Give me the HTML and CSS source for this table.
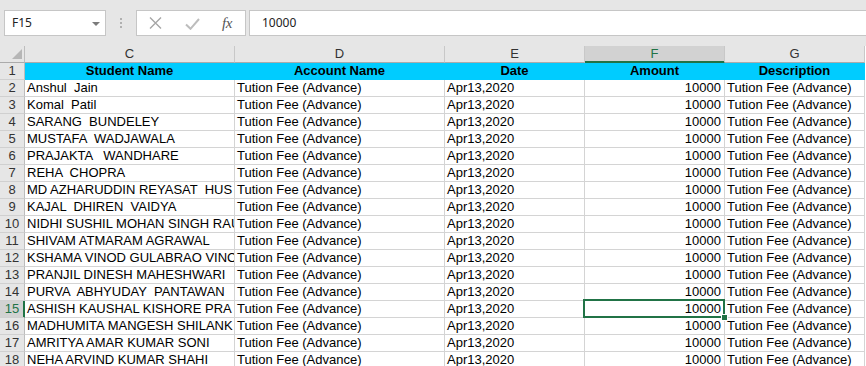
FILE: index.html
```html
<!DOCTYPE html>
<html lang="en">
<head>
<meta charset="utf-8">
<title>Fees sheet</title>
<link rel="stylesheet" href="styles.css">
</head>
<body>
<div class="app">
  <div class="toolbar">
    <div class="namebox">
      <span class="cellref">F15</span>
      <svg class="caret" width="8" height="4" viewBox="0 0 8 4"><path d="M0 0H8L4 4Z" fill="#7b7b7b"/></svg>
    </div>
    <div class="grip"><i></i><i></i><i></i></div>
    <div class="fxbox">
      <svg class="ico-x" width="13" height="12" viewBox="0 0 13 12"><path d="M1 0.5L12 11.5M12 0.5L1 11.5" stroke="#a6a6a6" stroke-width="1.4" fill="none"/></svg>
      <svg class="ico-ok" width="15" height="12" viewBox="0 0 15 12"><path d="M1 6.5L5.5 10.8L14 1" stroke="#bdbdbd" stroke-width="2" fill="none"/></svg>
      <span class="fx">fx</span>
    </div>
    <div class="formula">10000</div>
  </div>

  <div class="sheet">
    <div class="row">
      <div class="hd corner"><svg width="11" height="11" viewBox="0 0 11 11"><path d="M10 0V10H0Z" fill="#b6b6b6"/></svg></div>
      <div class="hd col">C</div>
      <div class="hd col">D</div>
      <div class="hd col">E</div>
      <div class="hd col sel">F</div>
      <div class="hd col">G</div>
    </div>
    <div class="row title">
      <div class="hd rn">1</div>
      <div class="c t">Student Name</div>
      <div class="c t">Account Name</div>
      <div class="c t">Date</div>
      <div class="c t">Amount</div>
      <div class="c t">Description</div>
    </div>
    <div class="row"><div class="hd rn">2</div><div class="c">Anshul  Jain</div><div class="c">Tution Fee (Advance)</div><div class="c">Apr13,2020</div><div class="c num">10000</div><div class="c">Tution Fee (Advance)</div></div>
    <div class="row"><div class="hd rn">3</div><div class="c">Komal  Patil</div><div class="c">Tution Fee (Advance)</div><div class="c">Apr13,2020</div><div class="c num">10000</div><div class="c">Tution Fee (Advance)</div></div>
    <div class="row"><div class="hd rn">4</div><div class="c">SARANG  BUNDELEY</div><div class="c">Tution Fee (Advance)</div><div class="c">Apr13,2020</div><div class="c num">10000</div><div class="c">Tution Fee (Advance)</div></div>
    <div class="row"><div class="hd rn">5</div><div class="c">MUSTAFA  WADJAWALA</div><div class="c">Tution Fee (Advance)</div><div class="c">Apr13,2020</div><div class="c num">10000</div><div class="c">Tution Fee (Advance)</div></div>
    <div class="row"><div class="hd rn">6</div><div class="c">PRAJAKTA   WANDHARE</div><div class="c">Tution Fee (Advance)</div><div class="c">Apr13,2020</div><div class="c num">10000</div><div class="c">Tution Fee (Advance)</div></div>
    <div class="row"><div class="hd rn">7</div><div class="c">REHA  CHOPRA</div><div class="c">Tution Fee (Advance)</div><div class="c">Apr13,2020</div><div class="c num">10000</div><div class="c">Tution Fee (Advance)</div></div>
    <div class="row"><div class="hd rn">8</div><div class="c">MD AZHARUDDIN REYASAT  HUS</div><div class="c">Tution Fee (Advance)</div><div class="c">Apr13,2020</div><div class="c num">10000</div><div class="c">Tution Fee (Advance)</div></div>
    <div class="row"><div class="hd rn">9</div><div class="c">KAJAL  DHIREN  VAIDYA</div><div class="c">Tution Fee (Advance)</div><div class="c">Apr13,2020</div><div class="c num">10000</div><div class="c">Tution Fee (Advance)</div></div>
    <div class="row"><div class="hd rn">10</div><div class="c">NIDHI SUSHIL MOHAN SINGH RAU</div><div class="c">Tution Fee (Advance)</div><div class="c">Apr13,2020</div><div class="c num">10000</div><div class="c">Tution Fee (Advance)</div></div>
    <div class="row"><div class="hd rn">11</div><div class="c">SHIVAM ATMARAM AGRAWAL</div><div class="c">Tution Fee (Advance)</div><div class="c">Apr13,2020</div><div class="c num">10000</div><div class="c">Tution Fee (Advance)</div></div>
    <div class="row"><div class="hd rn">12</div><div class="c">KSHAMA VINOD GULABRAO VINC</div><div class="c">Tution Fee (Advance)</div><div class="c">Apr13,2020</div><div class="c num">10000</div><div class="c">Tution Fee (Advance)</div></div>
    <div class="row"><div class="hd rn">13</div><div class="c">PRANJIL DINESH MAHESHWARI</div><div class="c">Tution Fee (Advance)</div><div class="c">Apr13,2020</div><div class="c num">10000</div><div class="c">Tution Fee (Advance)</div></div>
    <div class="row"><div class="hd rn">14</div><div class="c">PURVA  ABHYUDAY  PANTAWAN</div><div class="c">Tution Fee (Advance)</div><div class="c">Apr13,2020</div><div class="c num">10000</div><div class="c">Tution Fee (Advance)</div></div>
    <div class="row"><div class="hd rn sel">15</div><div class="c">ASHISH KAUSHAL KISHORE PRA</div><div class="c">Tution Fee (Advance)</div><div class="c">Apr13,2020</div><div class="c num active">10000</div><div class="c">Tution Fee (Advance)</div></div>
    <div class="row"><div class="hd rn">16</div><div class="c">MADHUMITA MANGESH SHILANK</div><div class="c">Tution Fee (Advance)</div><div class="c">Apr13,2020</div><div class="c num">10000</div><div class="c">Tution Fee (Advance)</div></div>
    <div class="row"><div class="hd rn">17</div><div class="c">AMRITYA AMAR KUMAR SONI</div><div class="c">Tution Fee (Advance)</div><div class="c">Apr13,2020</div><div class="c num">10000</div><div class="c">Tution Fee (Advance)</div></div>
    <div class="row"><div class="hd rn">18</div><div class="c">NEHA ARVIND KUMAR SHAHI</div><div class="c">Tution Fee (Advance)</div><div class="c">Apr13,2020</div><div class="c num">10000</div><div class="c">Tution Fee (Advance)</div></div>
  </div>
</div>
</body>
</html>
```

FILE: styles.css
```css
html, body {
  margin: 0;
  padding: 0;
  overflow: hidden;
  background: #ffffff;
}

.app {
  width: 866px;
  height: 366px;
  overflow: hidden;
}

/* ---------- formula bar ---------- */
.toolbar {
  height: 46px;
  box-sizing: border-box;
  padding-top: 10px;
  background: #e6e6e6;
  display: flex;
  align-items: flex-start;
  font-family: "Noto Sans", "Liberation Sans", sans-serif;
  font-size: 12px;
  color: #222;
}

.namebox {
  margin-left: 4px;
  width: 102px;
  height: 26px;
  box-sizing: border-box;
  border: 1px solid #c6c6c6;
  background: #fff;
  display: flex;
  align-items: center;
  justify-content: space-between;
  padding: 0 5px 0 7px;
}

.cellref {
  line-height: 16px;
}

.caret {
  display: block;
  margin-top: 1px;
}

.grip {
  width: 30px;
  height: 26px;
  display: flex;
  flex-direction: column;
  align-items: center;
  justify-content: center;
  gap: 2px;
}

.grip i {
  display: block;
  width: 2px;
  height: 2px;
  background: #b0b0b0;
}

.fxbox {
  width: 110px;
  height: 26px;
  box-sizing: border-box;
  border: 1px solid #c6c6c6;
  background: #fff;
  display: flex;
  align-items: center;
  padding-left: 12px;
}

.ico-x {
  display: block;
}

.ico-ok {
  display: block;
  margin-left: 23px;
  margin-top: 1px;
}

.fx {
  margin-left: 22px;
  font-family: "Liberation Serif", serif;
  font-style: italic;
  font-size: 15px;
  line-height: 16px;
  color: #555;
  letter-spacing: -0.5px;
}

.formula {
  flex: 1;
  margin-left: 3px;
  height: 26px;
  box-sizing: border-box;
  border: 1px solid #c6c6c6;
  border-right: none;
  background: #fff;
  padding-left: 12px;
  line-height: 24px;
}

/* ---------- sheet grid ---------- */
.sheet {
  display: grid;
  grid-template-columns: 25px 210px 210px 140px 140px 140px;
  grid-auto-rows: 17px;
  font-family: "Liberation Sans", Arial, sans-serif;
  font-size: 13px;
  color: #000;
}

.row {
  display: contents;
}

.hd {
  box-sizing: border-box;
  background: #e6e6e6;
  color: #333;
  border-right: 1px solid #c8c8c8;
  border-bottom: 1px solid #c8c8c8;
  text-align: center;
  line-height: 16px;
  overflow: hidden;
}

.corner {
  position: relative;
  border-bottom-color: #ababab;
  border-right-color: #bdbdbd;
}

.corner svg {
  position: absolute;
  left: 12px;
  top: 3px;
}

.col {
  border-bottom-color: #ababab;
}

.col.sel {
  background: #d2d2d2;
  color: #217346;
  border-bottom-color: #217346;
  box-shadow: inset 0 -1px 0 #217346;
}

.rn {
  border-right-color: #bdbdbd;
  border-bottom-color: #d0d0d0;
}

.rn.sel {
  background: #d2d2d2;
  color: #217346;
  border-right-color: #217346;
  box-shadow: inset -1px 0 0 #217346;
}

.c {
  box-sizing: border-box;
  border-right: 1px solid #d4d4d4;
  border-bottom: 1px solid #d4d4d4;
  padding: 0 2px;
  line-height: 16px;
  white-space: pre;
  overflow: hidden;
}

.c.num {
  text-align: right;
  padding-right: 3px;
}

.c.t {
  background: #00ccff;
  border-color: #00ccff;
  font-weight: bold;
  text-align: center;
}

.c.active {
  position: relative;
  overflow: visible;
}

.c.active::after {
  content: "";
  position: absolute;
  left: -2px;
  top: -2px;
  right: -1px;
  bottom: -1px;
  border: 2px solid #217346;
  pointer-events: none;
}

.c.active::before {
  content: "";
  position: absolute;
  left: 136px;
  top: 13px;
  width: 5px;
  height: 5px;
  background: #217346;
  border: 1px solid #fff;
  z-index: 1;
}
```
